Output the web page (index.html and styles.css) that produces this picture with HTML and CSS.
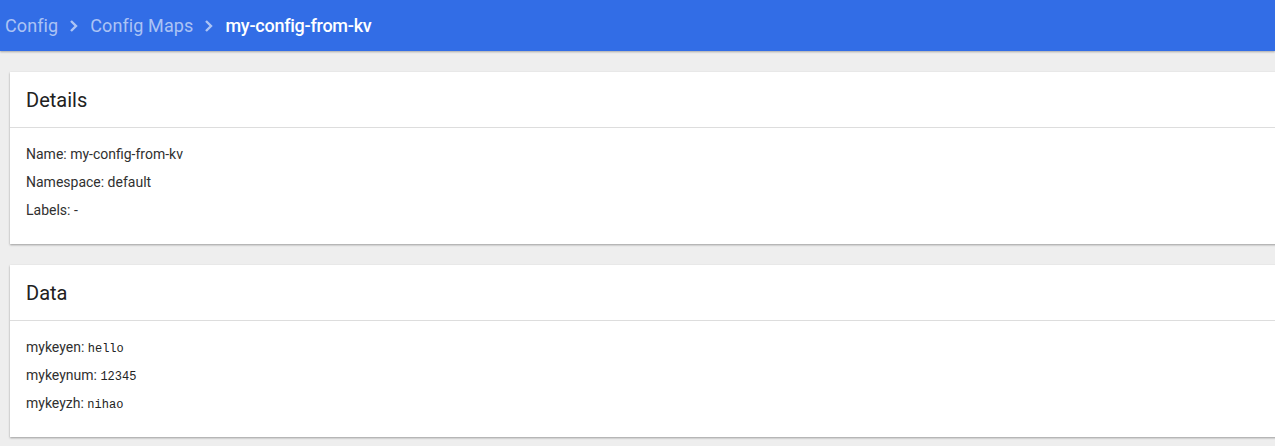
FILE: index.html
```html
<!DOCTYPE html>
<html lang="en">
<head>
	<meta charset="utf-8" />
	<title>my-config-from-kv</title>
	<link rel="stylesheet" href="styles.css">
</head>
<body>
<header class="toolbar">
	<a class="crumb">Config</a>
	<span class="chevron">
		<svg width="9" height="14" viewBox="0 0 9 14"><path d="M2 2l5 5-5 5" fill="none" stroke="currentColor" stroke-width="2.4"/></svg>
	</span>
	<a class="crumb">Config Maps</a>
	<span class="chevron">
		<svg width="9" height="14" viewBox="0 0 9 14"><path d="M2 2l5 5-5 5" fill="none" stroke="currentColor" stroke-width="2.4"/></svg>
	</span>
	<span class="crumb current">my-config-from-kv</span>
</header>

<main class="content">
	<section class="card">
		<div class="card-title">Details</div>
		<div class="card-body">
			<div class="row">Name: my-config-from-kv</div>
			<div class="row">Namespace: default</div>
			<div class="row">Labels: -</div>
		</div>
	</section>
	<section class="card">
		<div class="card-title">Data</div>
		<div class="card-body">
			<div class="row">mykeyen: <span class="value">hello</span></div>
			<div class="row">mykeynum: <span class="value">12345</span></div>
			<div class="row">mykeyzh: <span class="value">nihao</span></div>
		</div>
	</section>
</main>
</body>
</html>
```

FILE: styles.css
```css
body{
	margin: 0;
	background: #eeeeee;
	font-family: Roboto, "Liberation Sans", sans-serif;
	overflow: hidden;
}

.toolbar{
	height: 51px;
	background: #326de6;
	display: flex;
	align-items: center;
	padding: 0 5px;
	box-shadow: 0 1px 2px rgba(0,0,0,.3);
	font-size: 18px;
}
.crumb{
	color: rgba(255,255,255,.6);
	letter-spacing: .1px;
}
.crumb.current{
	color: #fff;
	font-weight: 500;
	letter-spacing: -.25px;
}
.chevron{
	color: rgba(255,255,255,.6);
	display: flex;
	margin: 1px 12px 0 11px;
}

.content{
	padding: 21px 0 0 10px;
	margin-right: -30px;
}
.card{
	background: #fff;
	margin-bottom: 21px;
	box-shadow: 0 1px 2px rgba(0,0,0,.35);
}
.card-title{
	height: 55px;
	line-height: 57px;
	padding: 0 16px;
	font-size: 20px;
	color: #212121;
	border-bottom: 1px solid #dddddd;
}
.card-body{
	padding: 12px 16px 20px;
}
.row{
	font-size: 14px;
	line-height: 28px;
	height: 28px;
	color: #303030;
}
.value{
	font-family: "Liberation Mono", monospace;
	font-size: 12px;
	line-height: 1;
	color: #222;
}
```
